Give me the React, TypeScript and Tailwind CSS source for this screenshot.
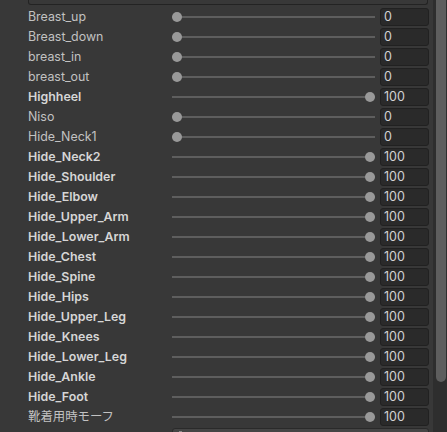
import React from "react";

const rows: { label: string; value: number; bold: boolean }[] = [
  { label: "Breast_up", value: 0, bold: false },
  { label: "Breast_down", value: 0, bold: false },
  { label: "breast_in", value: 0, bold: false },
  { label: "breast_out", value: 0, bold: false },
  { label: "Highheel", value: 100, bold: true },
  { label: "Niso", value: 0, bold: false },
  { label: "Hide_Neck1", value: 0, bold: false },
  { label: "Hide_Neck2", value: 100, bold: true },
  { label: "Hide_Shoulder", value: 100, bold: true },
  { label: "Hide_Elbow", value: 100, bold: true },
  { label: "Hide_Upper_Arm", value: 100, bold: true },
  { label: "Hide_Lower_Arm", value: 100, bold: true },
  { label: "Hide_Chest", value: 100, bold: true },
  { label: "Hide_Spine", value: 100, bold: true },
  { label: "Hide_Hips", value: 100, bold: true },
  { label: "Hide_Upper_Leg", value: 100, bold: true },
  { label: "Hide_Knees", value: 100, bold: true },
  { label: "Hide_Lower_Leg", value: 100, bold: true },
  { label: "Hide_Ankle", value: 100, bold: true },
  { label: "Hide_Foot", value: 100, bold: true },
  { label: "靴着用時モーフ", value: 100, bold: false },
];

function Slider({ value }: { value: number }) {
  const travel = 203 - 10;
  return (
    <div className="relative h-[20px] w-[203px] flex items-center">
      <div className="h-[2px] w-full bg-[#5e5e5e]" />
      <div
        className="absolute top-[5px] h-[10px] w-[10px] rounded-full bg-[#999999]"
        style={{ left: (value / 100) * travel }}
      />
    </div>
  );
}

export default function App() {
  return (
    <div
      className="w-[447px] h-[432px] bg-[#383838] flex overflow-hidden"
      style={{ fontFamily: 'Inter, "Noto Sans CJK JP", sans-serif' }}
    >
      <div className="w-[433px] flex flex-col">
        <div className="shrink-0 ml-[28px] w-[400px] h-[5px] border-x border-b border-[#232323] rounded-b-[3px] bg-[#383838]" />
        <div className="shrink-0 h-[2px]" />
        {rows.map((r) => (
          <div key={r.label} className="shrink-0 flex items-center h-[20px] pl-[28px]">
            <div
              className={
                "w-[144px] text-[12.4px] leading-[20px] whitespace-nowrap " +
                (r.bold ? "font-semibold text-[#d6d6d6]" : "text-[#c2c2c2]")
              }
            >
              {r.label}
            </div>
            <Slider value={r.value} />
            <div className="ml-[5px] w-[49px] h-[18px] rounded-[3px] bg-[#2a2a2a] border border-[#212121] text-[12.5px] leading-[16px] text-[#d2d2d2] pl-[3px]">
              {r.value}
            </div>
          </div>
        ))}
        <div className="shrink-0 mt-[1px] ml-[172px] w-[257px] h-[10px] rounded-t-[3px] bg-[#454545] border border-[#2a2a2a] relative">
          <div className="absolute left-[6px] top-[2px] w-[3px] h-[3px] bg-[#8a8a8a]" />
        </div>
      </div>
      <div className="w-[14px] h-full bg-[#2e2e2e] pl-[3px] pr-[1px]">
        <div className="w-[10px] h-[382px] bg-[#5e5e5e] rounded-b-[5px]" />
      </div>
    </div>
  );
}
